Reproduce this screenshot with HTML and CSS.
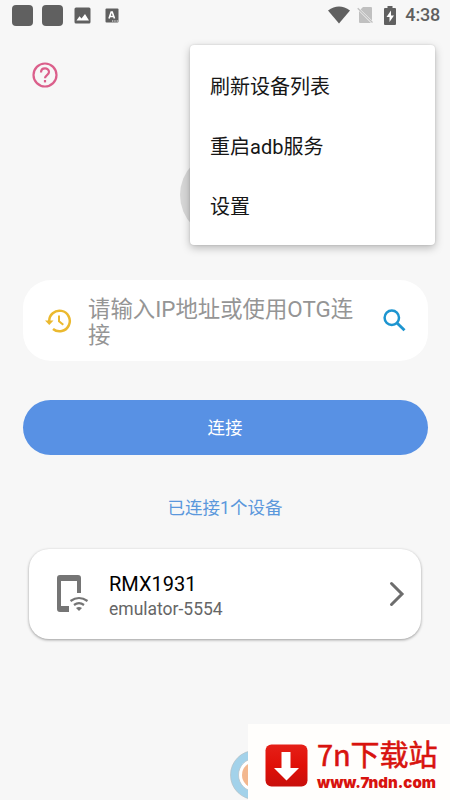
FILE: index.html
```
<!DOCTYPE html>
<html lang="zh-CN">
<head>
<meta charset="utf-8">
<title>ADB</title>
<link rel="stylesheet" href="styles.css">
</head>
<body>
<main class="screen">
  <header class="status">
    <div class="notices">
      <i class="block"></i><i class="block"></i>
      <svg class="photo" width="17" height="17" viewBox="0 0 17 17"><rect x=".5" y=".5" width="16" height="16" rx="1.5" fill="#606060"/><path d="M2.500 13.500l3-4.300 2 2.400 3.500-4.600 4 6.500z" fill="#fff"/></svg>
      <svg class="lang" width="14" height="15" viewBox="0 0 14 15"><rect x=".5" y=".5" width="13" height="14" rx="1" fill="#606060"/><path d="M4 10.500L6.200 4h1L9.500 10.500M5 8.500h3.500" fill="none" stroke="#fff" stroke-width="1.600"/><path d="M7 13h1.300M9.300 13h1.300M11.600 13h1.300" stroke="#fff" stroke-width="1.200"/></svg>
    </div>
    <div class="system">
      <svg width="22" height="18" viewBox="0 0 22 18"><path d="M0 4.500Q11-3.500 22 4.500L11 17.500z" fill="#606060"/></svg>
      <svg class="sim" width="17" height="18" viewBox="0 0 17 18"><path d="M6 1h8a1 1 0 0 1 1 1v12.500L3.500 3.500zM2 5l12 12H3a1 1 0 0 1-1-1z" fill="#c0c0c0"/><path d="M.7 2.200l14.800 14.300" stroke="#c0c0c0" stroke-width="1.300"/></svg>
      <svg class="battery" width="12" height="19" viewBox="0 0 12 19"><path d="M3.500 0h5v2H11q1 0 1 1v15q0 1-1 1H1q-1 0-1-1V3q0-1 1-1h2.500z" fill="#606060"/><path d="M7 4.500L2.500 11h3v5L10 9.500H7z" fill="#fff"/></svg>
      <span class="time">4:38</span>
    </div>
  </header>

  <section class="hero">
    <svg class="help" width="26" height="26" viewBox="0 0 26 26" fill="none" stroke="#db5f8b" stroke-width="2.200"><circle cx="13" cy="13" r="11.500"/><path d="M9 10.500c0-5.500 8-5.300 8-.5 0 3-4 3.200-4 6.200"/><path d="M13 18v2.400"/></svg>
    <div class="avatar"></div>
  </section>

  <section class="address">
    <svg class="history" width="27" height="24" viewBox="0 0 27 24" fill="none" stroke="#ebb92f" stroke-width="2.500"><path d="M4.200 12.500A10.300 10.300 0 1 1 8 20"/><path d="M14 6.500v5.800l4.300 3.500" stroke-width="2"/><path d="M0 11.500h8.500L4.300 16z" fill="#ebb92f" stroke="none"/></svg>
    <p class="hint">请输入IP地址或使用OTG连接</p>
    <svg class="search" width="23" height="23" viewBox="0 0 23 23" fill="none" stroke="#1d95d0"><circle cx="8.800" cy="8.700" r="7.200" stroke-width="2.500"/><path d="M14 14l7.500 7.300" stroke-width="2.900"/></svg>
  </section>

  <button class="connect">连接</button>
  <p class="count">已连接1个设备</p>

  <section class="device">
    <svg class="phone" width="32" height="38" viewBox="0 0 32 38"><path d="M3 0h18q3 0 3 3v15h-4V6H4v25h8v6H3q-3 0-3-3V3q0-3 3-3z" fill="#757575"/><g fill="none" stroke="#757575" stroke-width="2.200"><path d="M13.500 26q8.500-6 17 0M17 30q5-3.700 10 0"/></g><path d="M19 33q3-2 6 0l-3 3z" fill="#757575"/></svg>
    <div class="info"><div class="name">RMX1931</div><div class="serial">emulator-5554</div></div>
    <svg class="arrow" width="16" height="26" viewBox="0 0 16 26"><path d="M2.500 2.500L13 13 2.500 23.500" fill="none" stroke="#6d6d6d" stroke-width="3" stroke-linecap="round"/></svg>
  </section>

  <nav class="menu">
    <div>刷新设备列表</div>
    <div>重启adb服务</div>
    <div>设置</div>
  </nav>

  <svg class="rings" width="50" height="50" viewBox="0 0 50 50"><circle cx="25" cy="25" r="24.500" fill="#a3d2ea" stroke="#b5bfc3" stroke-width=".7"/><circle cx="25" cy="25" r="16.500" fill="#fff" stroke="#b5bfc3" stroke-width=".7"/><circle cx="25" cy="25" r="13" fill="#f3b78e"/></svg>
  <aside class="site">
    <svg class="download" width="43" height="43" viewBox="0 0 43 43"><defs><linearGradient id="red" x2="0" y2="1"><stop stop-color="#e52018"/><stop offset=".5" stop-color="#e01008"/><stop offset="1" stop-color="#c80f0b"/></linearGradient></defs><rect x=".5" y=".5" width="42" height="42" rx="6" fill="url(#red)"/><path d="M16.500 8h9v16H34L21.500 36.500 9 24h7.500z" fill="#fff"/></svg>
    <div class="brand"><div class="brand-name">7n下载站</div><div class="brand-url">www.7ndn.com</div></div>
  </aside>
</main>
</body>
</html>
```
FILE: styles.css
```
* { box-sizing: border-box; }
body { margin: 0; font-family: Roboto, "Noto Sans CJK SC", sans-serif; }
p { margin: 0; }
svg { display: block; flex: none; }
.screen { position: relative; width: 450px; height: 800px; overflow: hidden; background: #f7f7f7; }
.status { display: flex; justify-content: space-between; height: 30px; padding: 0 10px 0 12px; }
.notices { display: flex; align-items: center; gap: 9px; }
.block { width: 21px; height: 21px; border-radius: 4px; background: #606060; }
.photo { margin-left: 2px; }
.lang { margin-left: 5px; }
.system { display: flex; align-items: center; color: #606060; }
.sim { margin-left: 7px; }
.battery { margin-left: 10px; }
.time { margin-left: 9px; font-size: 18px; font-weight: 500; line-height: 32px; letter-spacing: -.2px; }
.hero { display: flex; height: 250px; padding: 32px 0 0 32px; }
.avatar { width: 86px; height: 86px; margin: 90px 0 0 122px; border-radius: 50%; background: #d7d7d7; }
.address { display: flex; align-items: center; height: 81px; margin: 0 22.500px; padding: 0 22px 0 22.500px; border-radius: 28px; background: #fff; }
.hint { width: 272px; margin-left: 16px; padding-top: 3px; color: #959595; font-size: 22.400px; line-height: 26px; }
.search { margin-left: auto; }
.connect { display: block; width: 405px; height: 55px; margin: 39px auto 0; padding: 1px 0 0; border: 0; border-radius: 28px; background: #5891e4; color: #fff; font: 17.500px/54px Roboto, "Noto Sans CJK SC", sans-serif; }
.count { margin-top: 39px; color: #5b98dc; font-size: 17.500px; line-height: 28px; text-align: center; }
.device { display: flex; align-items: center; height: 90px; margin: 27px 29px 0; padding: 0 16px 0 28px; border-radius: 20px; background: #fff; box-shadow: 0 1px 3px rgba(0, 0, 0, .38); }
.info { margin-left: 20px; padding-top: 3px; }
.name { color: #000; font-size: 20px; line-height: 26px; }
.serial { color: #666; font-size: 17.500px; line-height: 24px; }
.arrow { margin-left: auto; }
.menu { position: absolute; left: 190px; top: 45px; width: 245px; height: 200px; padding: 12px 20px 8px; border-radius: 4px; background: #fff; box-shadow: 0 3px 9px rgba(0, 0, 0, .25), 0 0 2px rgba(0, 0, 0, .15); color: #161616; font-size: 20px; line-height: 60px; }
.rings { position: absolute; left: 230px; top: 750px; }
.site { position: absolute; left: 248px; top: 724px; display: flex; width: 202px; height: 76px; padding: 19.500px 0 0 17px; background: #fffefc; color: #d8130e; }
.brand { margin-left: 9px; white-space: nowrap; }
.brand-name { height: 43px; margin-top: -12px; font: 29px/43px "Noto Sans CJK SC", sans-serif; letter-spacing: -.1px; -webkit-text-stroke: .6px #d8130e; }
.brand-url { font: 900 15px/16px Inter, sans-serif; }
```
